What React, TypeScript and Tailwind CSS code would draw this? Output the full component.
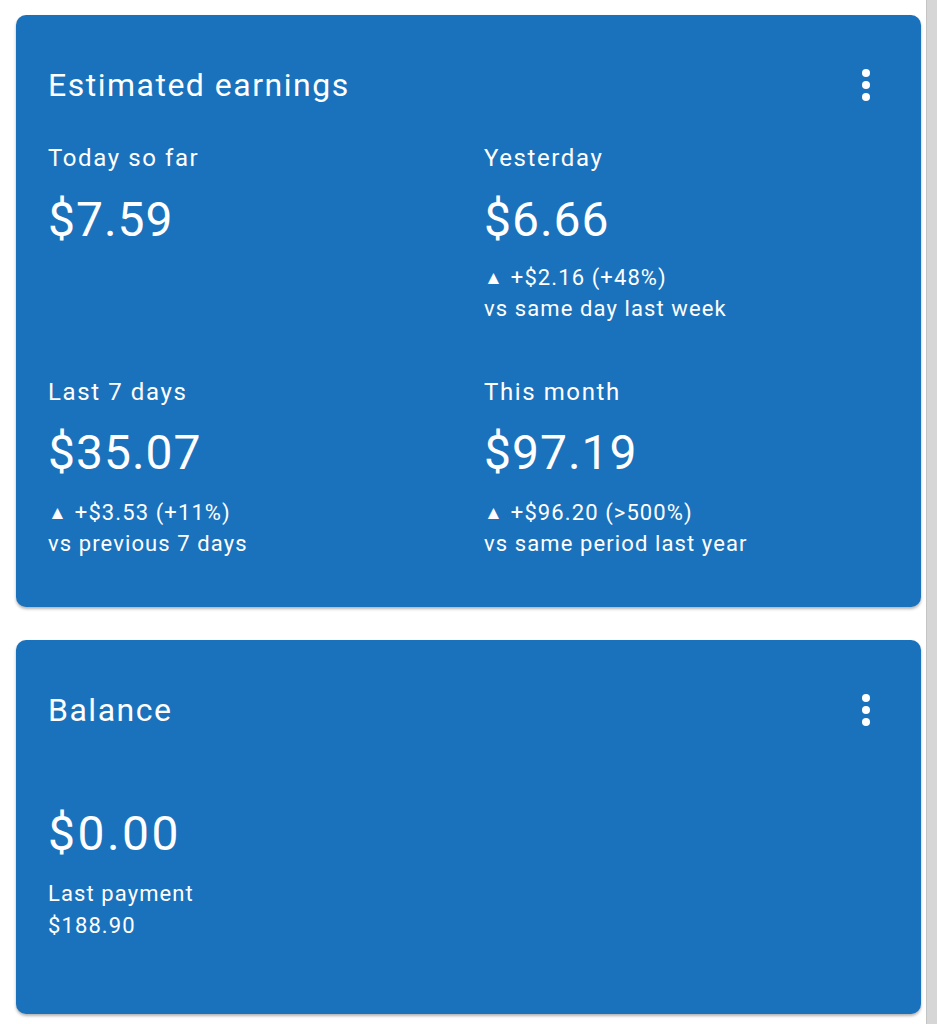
import React from 'react';

const font = { fontFamily: 'Roboto, "Noto Sans", Arial, sans-serif' };

const Dots = () => (
  <svg width="12" height="34" viewBox="0 0 12 34" className="fill-white">
    <circle cx="6" cy="5" r="4" />
    <circle cx="6" cy="17" r="4" />
    <circle cx="6" cy="29" r="4" />
  </svg>
);

interface Stat {
  label: string;
  value: string;
  delta?: string;
  vs?: string;
}

const StatBlock: React.FC<{ s: Stat; first?: boolean }> = ({ s, first }) => (
  <div className="flex flex-col">
    <div className="text-[24px] leading-[32px] tracking-[1.6px]">{s.label}</div>
    <div className={`text-[48px] leading-[56px] tracking-[1px] ${first ? 'mt-[18px]' : 'mt-[17px]'}`}>{s.value}</div>
    {s.delta && (
      <>
        <div className={`${first ? 'mt-[14px]' : 'mt-[16px]'} text-[22px] leading-[31px] tracking-[1.1px] flex items-center`}>
          <span className="text-[19px] mr-[8px] tracking-normal">▲</span>
          {s.delta}
        </div>
        <div className="text-[22px] leading-[31px] tracking-[1.1px]">{s.vs}</div>
      </>
    )}
  </div>
);

const CardHeader: React.FC<{ title: string }> = ({ title }) => (
  <div className="flex items-center justify-between h-[40px]">
    <div className="text-[32px] leading-[40px] tracking-[1.5px]">{title}</div>
    <div className="mr-[17px] flex items-center"><Dots /></div>
  </div>
);

export default function App() {
  const row1: Stat[] = [
    { label: 'Today so far', value: '$7.59' },
    { label: 'Yesterday', value: '$6.66', delta: '+$2.16 (+48%)', vs: 'vs same day last week' },
  ];
  const row2: Stat[] = [
    { label: 'Last 7 days', value: '$35.07', delta: '+$3.53 (+11%)', vs: 'vs previous 7 days' },
    { label: 'This month', value: '$97.19', delta: '+$96.20 (>500%)', vs: 'vs same period last year' },
  ];

  return (
    <div className="flex w-[937px] h-[1024px] bg-white overflow-hidden text-white" style={font}>
      <div className="flex-1 flex flex-col pt-[15px] pl-[16px] pr-[5px] gap-[33px]">
        <div className="bg-[#1a72bd] rounded-[10px] shadow-[0_2px_3px_rgba(0,0,0,0.3)] pt-[50px] pl-[32px] pr-[32px] pb-[48px]">
          <CardHeader title="Estimated earnings" />
          <div className="grid grid-cols-[436px_1fr] mt-[37px]">
            <StatBlock s={row1[0]} first />
            <StatBlock s={row1[1]} first />
          </div>
          <div className="grid grid-cols-[436px_1fr] mt-[52px]">
            <StatBlock s={row2[0]} />
            <StatBlock s={row2[1]} />
          </div>
        </div>
        <div className="bg-[#1a72bd] rounded-[10px] shadow-[0_2px_3px_rgba(0,0,0,0.3)] pt-[50px] pl-[32px] pr-[32px] h-[374px]">
          <CardHeader title="Balance" />
          <div className="mt-[76px] text-[48px] leading-[56px] tracking-[2.5px]">$0.00</div>
          <div className="mt-[16px] text-[22px] leading-[32px] tracking-[1.1px]">Last payment</div>
          <div className="text-[22px] leading-[31px] tracking-[1.1px]">$188.90</div>
        </div>
      </div>
      <div className="w-[11px] bg-[#d6d6d6] border-l border-[#c4c4c4]" />
    </div>
  );
}
